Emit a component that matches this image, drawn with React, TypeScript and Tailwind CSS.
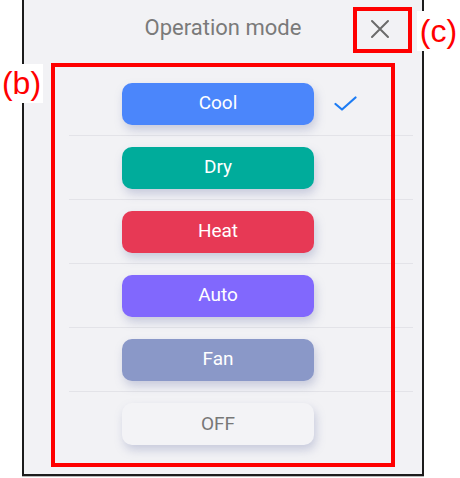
import React from "react";

type Mode = { label: string; bg: string; text: string; selected?: boolean };

const modes: Mode[] = [
  { label: "Cool", bg: "bg-[#4b86fb]", text: "text-white", selected: true },
  { label: "Dry", bg: "bg-[#00ac9b]", text: "text-white" },
  { label: "Heat", bg: "bg-[#e73955]", text: "text-white" },
  { label: "Auto", bg: "bg-[#8168fd]", text: "text-white" },
  { label: "Fan", bg: "bg-[#8a98c8]", text: "text-white" },
  { label: "OFF", bg: "bg-[#f3f3f6]", text: "text-[#777777]" },
];

export default function App() {
  return (
    <div className="relative w-[460px] h-[478px] bg-white overflow-hidden" style={{ fontFamily: "Roboto, 'Noto Sans', sans-serif" }}>
      <div className="ml-[22px] w-[402px] h-[476px] bg-[#f2f2f5] border-x-2 border-b-2 border-[#1c1c1c] shadow-[0_1px_0_#b8b8b8]">
        <div className="relative h-[72px] pt-[15px]">
          <div className="text-center text-[22px] leading-[26px] text-[#7a7a7a]">Operation mode</div>
          <svg className="absolute right-[32px] top-[19px]" width="20" height="20" viewBox="0 0 20 20">
            <path d="M2 2 L18 18 M18 2 L2 18" stroke="#6b6b6b" strokeWidth="2" fill="none" strokeLinecap="round" />
          </svg>
        </div>
        <div className="ml-[45px] w-[344px] flex flex-col">
          {modes.map((m, i) => (
            <div
              key={m.label}
              className={`h-[64px] flex items-center pl-[53px] ${i < modes.length - 1 ? "border-b border-[#e3e3e8]" : ""}`}
            >
              <div
                className={`w-[192px] h-[42px] rounded-[10px] ${m.bg} ${m.text} flex items-center justify-center text-[19px] shadow-[2px_5px_10px_rgba(120,130,175,0.35)]`}
              >
                {m.label}
              </div>
              {m.selected && (
                <svg className="ml-[20px]" width="23" height="16" viewBox="0 0 23 16">
                  <path d="M1.5 8 L8 13.5 L21.5 1.5" stroke="#1d7cf4" strokeWidth="2.2" fill="none" strokeLinecap="round" strokeLinejoin="round" />
                </svg>
              )}
            </div>
          ))}
        </div>
      </div>

      {/* annotation overlays */}
      <div className="absolute left-[51px] top-[63px] w-[344px] h-[404px] border-4 border-[#ff0000]" />
      <div className="absolute left-[353px] top-[7px] w-[59px] h-[46px] border-4 border-[#ff0000]" />
      <div
        className="absolute left-0 top-[64px] w-[43px] h-[39px] bg-white text-[#ff0000] text-[32px] leading-[39px] text-center"
        style={{ fontFamily: "'Liberation Sans', Arial, sans-serif" }}
      >
        (b)
      </div>
      <div
        className="absolute left-[417px] top-[11px] w-[43px] h-[40px] bg-white text-[#ff0000] text-[32px] leading-[40px] text-center"
        style={{ fontFamily: "'Liberation Sans', Arial, sans-serif" }}
      >
        (c)
      </div>
    </div>
  );
}
